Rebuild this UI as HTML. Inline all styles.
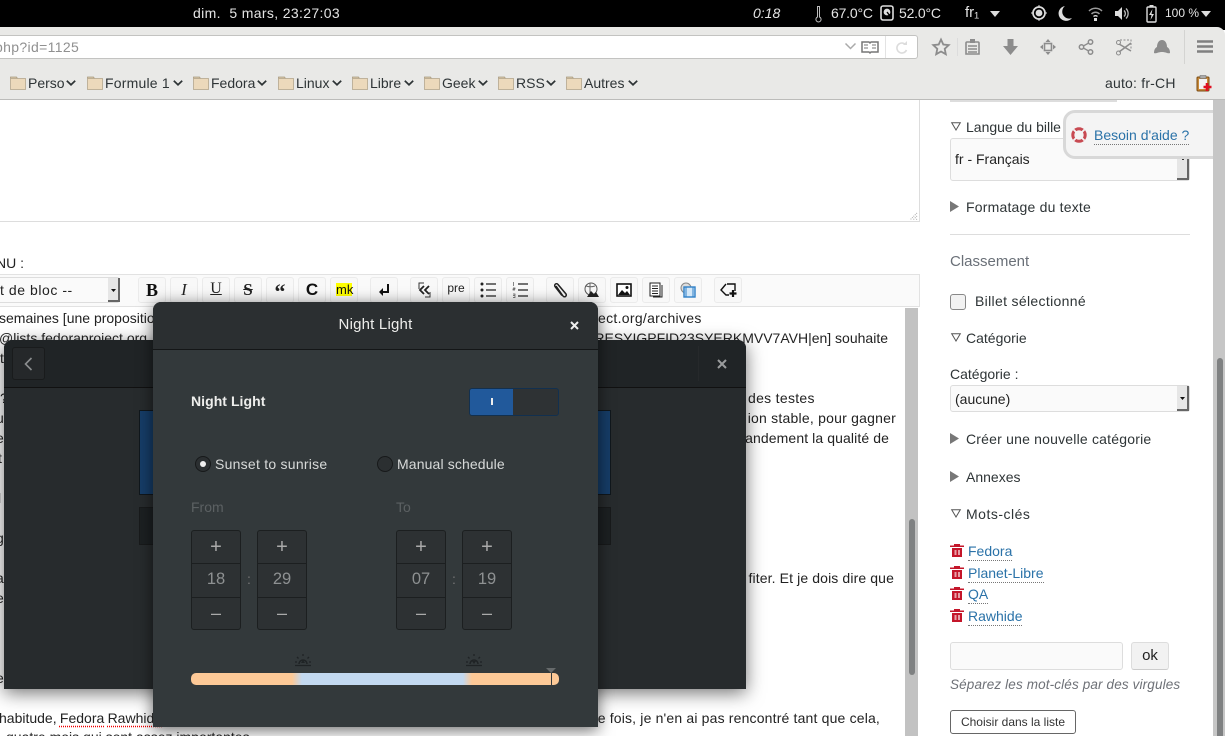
<!DOCTYPE html>
<html><head><meta charset="utf-8"><style>
html{margin:0;padding:0;width:1225px;height:736px;overflow:hidden}
body{margin:0;padding:0;width:1225px;height:736px;position:relative;overflow:hidden;background:#fff;font-family:"Liberation Sans",sans-serif;font-size:14px;color:#2e3436}
.a{position:absolute}
.t{position:absolute;white-space:nowrap;line-height:20px;height:20px}
svg{position:absolute;overflow:visible}
.btn{position:absolute;top:277px;width:28px;height:26px;background:#f8f8f8;border:1px solid #ebebeb;border-radius:3px;box-sizing:border-box}
.fold{position:absolute;top:76px;width:16px;height:14px}
.cv{position:absolute;top:80px}
.spin{position:absolute;top:530px;width:50px;height:100px;background:#2d3133;border:1px solid #1c1f20;border-radius:3px;box-sizing:border-box}
.spin i{position:absolute;left:0;right:0;height:1px;background:#1c1f20}
.spin b{position:absolute;left:0;right:0;text-align:center;font-weight:normal;color:#8e9192;line-height:20px}
.spin b.n{top:38px;font-size:16.5px}
.tag{position:absolute;left:950px;width:14px;height:14px}
.lnk{color:#2a72a8;border-bottom:1px dotted #777;line-height:16px;height:17px}
.shd{font-size:14px;color:#222}
.sel{position:absolute;background:#fafafa;border:1px solid #ddd;border-radius:3px;box-sizing:border-box}
.h{position:absolute;background:#e6e6e6;border-right:2px solid #666;border-bottom:2px solid #666;box-sizing:border-box}
</style></head><body>

<!-- top bar -->
<div class="a" style="left:0;top:0;width:1225px;height:30px;background:#000"></div>
<div class="t" style="left:193px;top:3px;color:#e4e4e4;font-size:14px;letter-spacing:.35px">dim.&nbsp; 5 mars, 23:27:03</div>
<div class="t" style="left:753px;top:3px;color:#e4e4e4;font-style:italic;font-size:14px">0:18</div>
<svg style="left:815px;top:5px" width="8" height="18"><path d="M2.5 1.5h2v10.5a2.6 2.6 0 1 1-2 0z" fill="none" stroke="#bbb"/></svg>
<div class="t" style="left:831px;top:3px;color:#e4e4e4;font-size:14px;letter-spacing:-.2px">67.0°C</div>
<svg style="left:880px;top:5px" width="14" height="16"><rect x="1" y="1" width="12" height="14" rx="2" fill="none" stroke="#ddd" stroke-width="1.6"/><circle cx="7" cy="7" r="3.4" fill="#ddd"/><path d="M7 7l3 4" stroke="#000" stroke-width="1.4"/></svg>
<div class="t" style="left:899px;top:3px;color:#e4e4e4;font-size:14px;letter-spacing:-.2px">52.0°C</div>
<div class="t" style="left:965px;top:3px;color:#e4e4e4;font-size:15px">fr₁</div>
<svg style="left:990px;top:11px" width="10" height="6"><path d="M0 0h10L5 6z" fill="#ddd"/></svg>
<svg style="left:1031px;top:5px" width="16" height="16"><circle cx="8" cy="8" r="6" fill="none" stroke="#ddd" stroke-width="1.7"/><circle cx="8" cy="8" r="3.4" fill="#ddd"/><path d="M8 0v2M8 14v2M0 8h2M14 8h2" stroke="#ddd"/></svg>
<svg style="left:1060px;top:6px" width="13" height="15"><path d="M5 0a7.5 7.5 0 1 0 7 12 A7 7 0 0 1 5 0z" fill="#ddd"/></svg>
<svg style="left:1088px;top:6px" width="15" height="15"><path d="M1 5a9 9 0 0 1 13 0M3.5 8a5.5 5.5 0 0 1 8 0" fill="none" stroke="#999" stroke-width="1.5"/><path d="M5.5 10.5a3 3 0 0 1 4 0" fill="none" stroke="#ddd" stroke-width="1.5"/><rect x="6" y="12" width="3" height="3" fill="#ddd"/></svg>
<svg style="left:1115px;top:6px" width="15" height="15"><path d="M0 5h3l4-4v13l-4-4H0z" fill="#ddd"/><path d="M9 4.5a4 4 0 0 1 0 6M11 2.5a7 7 0 0 1 0 10" fill="none" stroke="#bbb" stroke-width="1.3"/></svg>
<svg style="left:1146px;top:5px" width="11" height="18"><rect x="1" y="2" width="9" height="15" rx="1" fill="none" stroke="#ddd" stroke-width="1.4"/><rect x="3.5" y="0" width="4" height="2" fill="#ddd"/><path d="M6.5 4L3 10h2.5l-1 5L8 9H5.5z" fill="#ddd"/></svg>
<div class="t" style="left:1165px;top:3px;color:#e4e4e4;font-size:12px">100 %</div>
<svg style="left:1201px;top:11px" width="10" height="6"><path d="M0 0h10L5 6z" fill="#ddd"/></svg>

<!-- browser toolbar -->
<div class="a" style="left:0;top:27px;width:1225px;height:73px;background:#e9e9e7;border-bottom:1px solid #bcbcba;border-radius:0 8px 0 0;box-sizing:border-box"></div>
<div class="a" style="left:-4px;top:35px;width:922px;height:24px;background:#fff;border:1px solid #c3c3c1;border-radius:3px;box-sizing:border-box"></div>
<div class="t" style="left:-5px;top:37px;color:#909090;font-size:14px;letter-spacing:.35px">php?id=1125</div>
<svg style="left:845px;top:43px" width="11" height="7"><path d="M.5 .5L5.5 5.5 10.5 .5" fill="none" stroke="#aaa" stroke-width="1.5"/></svg>
<svg style="left:861px;top:40px" width="18" height="15"><path d="M1 2h7l1 1 1-1h7v10h-7l-1 1-1-1H1z" fill="none" stroke="#777" stroke-width="1.5"/><path d="M3 5h4M3 8h4M11 5h4M11 8h4" stroke="#777"/></svg>
<div class="a" style="left:885px;top:36px;width:1px;height:22px;background:#e3e3e3"></div>
<svg style="left:896px;top:41px" width="12" height="13"><path d="M9.5 3.5A5 5 0 1 0 10.5 9" fill="none" stroke="#dcdcdc" stroke-width="1.6"/><path d="M7 4l4-4v4z" fill="#dcdcdc"/></svg>
<svg style="left:932px;top:38px" width="18" height="18"><path d="M9 1.5l2.3 5 5.4.6-4 3.7 1.1 5.4L9 13.5 4.200 16.200l1.100-5.400-4-3.700 5.400-.6z" fill="none" stroke="#8c8c8c" stroke-width="1.8"/></svg>
<div class="a" style="left:957px;top:38px;width:1px;height:18px;background:#dcdcdc"></div>
<svg style="left:965px;top:39px" width="15" height="16"><path d="M2 3h11a1 1 0 0 1 1 1v11H1V4a1 1 0 0 1 1-1z" fill="none" stroke="#8c8c8c" stroke-width="1.6"/><rect x="5" y="0" width="5" height="4" fill="#8c8c8c"/><path d="M3 7h9M3 10h9M3 13h9" stroke="#8c8c8c" stroke-width="1.4"/></svg>
<svg style="left:1003px;top:39px" width="15" height="16"><path d="M4.500 0h6v7H15l-7.500 9L0 7h4.500z" fill="#8c8c8c"/></svg>
<svg style="left:1040px;top:39px" width="16" height="16"><rect x="4.500" y="4.500" width="7" height="7" fill="none" stroke="#8c8c8c" stroke-width="1.600"/><path d="M8 0l2.500 3h-5zM8 16l2.500-3h-5zM0 8l3-2.500v5zM16 8l-3-2.500v5z" fill="#8c8c8c"/></svg>
<svg style="left:1078px;top:39px" width="16" height="16"><path d="M12.500 3L3.500 8l9 5" fill="none" stroke="#8c8c8c" stroke-width="1.300"/><circle cx="12.500" cy="3" r="2.200" fill="#e9e9e7" stroke="#8c8c8c" stroke-width="1.500"/><circle cx="3.500" cy="8" r="2.200" fill="#e9e9e7" stroke="#8c8c8c" stroke-width="1.500"/><circle cx="12.500" cy="13" r="2.200" fill="#e9e9e7" stroke="#8c8c8c" stroke-width="1.500"/></svg>
<svg style="left:1116px;top:39px" width="16" height="17"><path d="M4 1h11v10" fill="none" stroke="#8c8c8c" stroke-dasharray="2 1.500"/><path d="M15 4L3 13M15 12L3 5" stroke="#8c8c8c" stroke-width="1.500"/><circle cx="2.500" cy="3.500" r="2" fill="none" stroke="#8c8c8c"/><circle cx="2.500" cy="14" r="2" fill="none" stroke="#8c8c8c"/></svg>
<svg style="left:1154px;top:40px" width="16" height="14"><path d="M0 13c0-3 1-5 3-6 0-4 2-7 5-7s5 3 5 7c2 1 3 3 3 6-2 1-4-1-8-1s-6 2-8 1z" fill="#8c8c8c"/></svg>
<div class="a" style="left:1184px;top:30px;width:1px;height:34px;background:#d4d4d2"></div>
<svg style="left:1197px;top:40px" width="16" height="13"><path d="M0 1.500h16M0 6.500h16M0 11.500h16" stroke="#808080" stroke-width="2.400"/></svg>

<!-- bookmarks -->
<svg width="0" height="0"><defs><g id="f"><path d="M.5 2.500V1h6l1 1.500" fill="#d9c6a8" stroke="#a89a80" stroke-width=".8"/><rect x=".5" y="2.500" width="15" height="11" fill="#ecd9bb" stroke="#b5a78e" stroke-width=".8"/></g><path id="c" d="M.8 .8L5 4.800 9.200 .8" fill="none" stroke="#2e3436" stroke-width="1.700"/></defs></svg>
<svg class="fold" style="left:10px"><use href="#f"/></svg><div class="t" style="left:28px;top:73px">Perso</div><svg class="cv" style="left:66px" width="10" height="6"><use href="#c"/></svg>
<svg class="fold" style="left:87px"><use href="#f"/></svg><div class="t" style="left:105px;top:73px;letter-spacing:.2px">Formule 1</div><svg class="cv" style="left:173px" width="10" height="6"><use href="#c"/></svg>
<svg class="fold" style="left:193px"><use href="#f"/></svg><div class="t" style="left:211px;top:73px">Fedora</div><svg class="cv" style="left:257px" width="10" height="6"><use href="#c"/></svg>
<svg class="fold" style="left:278px"><use href="#f"/></svg><div class="t" style="left:296px;top:73px">Linux</div><svg class="cv" style="left:332px" width="10" height="6"><use href="#c"/></svg>
<svg class="fold" style="left:352px"><use href="#f"/></svg><div class="t" style="left:370px;top:73px">Libre</div><svg class="cv" style="left:404px" width="10" height="6"><use href="#c"/></svg>
<svg class="fold" style="left:424px"><use href="#f"/></svg><div class="t" style="left:442px;top:73px">Geek</div><svg class="cv" style="left:478px" width="10" height="6"><use href="#c"/></svg>
<svg class="fold" style="left:498px"><use href="#f"/></svg><div class="t" style="left:516px;top:73px">RSS</div><svg class="cv" style="left:546px" width="10" height="6"><use href="#c"/></svg>
<svg class="fold" style="left:566px"><use href="#f"/></svg><div class="t" style="left:584px;top:73px">Autres</div><svg class="cv" style="left:628px" width="10" height="6"><use href="#c"/></svg>
<div class="t" style="left:1105px;top:73px;letter-spacing:.2px">auto: fr-CH</div>
<svg style="left:1196px;top:75px" width="16" height="17"><rect x="1" y="2" width="12" height="14" rx="1" fill="#c88a3a" stroke="#7a4a10"/><rect x="3" y="4" width="8" height="10" fill="#f4f4f4"/><rect x="4" y="0.500" width="6" height="3" fill="#aaa" stroke="#666" stroke-width=".5"/><path d="M11 8v8M7.500 12h8" stroke="#e01020" stroke-width="2.600"/></svg>

<!-- left content -->
<div class="a" style="left:0;top:100px;width:920px;height:122px;background:#fff;border-right:1px solid #ddd;border-bottom:1px solid #ddd;box-sizing:border-box"></div>
<svg style="left:908px;top:212px" width="10" height="9"><path d="M9 1L2 8M9 4L5 8M9 7L8 8" stroke="#aaa" stroke-dasharray="1 1"/></svg>
<div class="t" style="left:-4px;top:253px;color:#222;font-size:14px">NU :</div>

<div class="a" style="left:-2px;top:274px;width:922px;height:33px;background:#fafafa;border:1px solid #e2e2e2;box-sizing:border-box"></div>
<div class="sel" style="left:-5px;top:277px;width:125px;height:26px"></div>
<div class="h" style="left:108px;top:278px;width:12px;height:24px"></div>
<svg style="left:111px;top:289px" width="5" height="3"><path d="M0 0h5L2.500 3z" fill="#111"/></svg>
<div class="t" style="left:0;top:280px;color:#222;letter-spacing:.55px">t de bloc --</div>

<div class="btn" style="left:138px"></div><div class="t" style="left:138px;top:280px;width:28px;text-align:center;font:bold 18px/20px 'Liberation Serif',serif;color:#111">B</div>
<div class="btn" style="left:170px"></div><div class="t" style="left:170px;top:280px;width:28px;text-align:center;font:italic 17px/20px 'Liberation Serif',serif;color:#222">I</div>
<div class="btn" style="left:202px"></div><div class="t" style="left:202px;top:279px;width:28px;text-align:center;font:16px/20px 'Liberation Serif',serif;color:#222;text-decoration:underline">U</div>
<div class="btn" style="left:234px"></div><div class="t" style="left:234px;top:280px;width:28px;text-align:center;font:bold 17px/20px 'Liberation Serif',serif;color:#222;text-decoration:line-through">S</div>
<div class="btn" style="left:266px"></div><div class="t" style="left:266px;top:282px;width:28px;text-align:center;font:bold 22px/20px 'Liberation Serif',serif;color:#222">“</div>
<div class="btn" style="left:298px"></div><div class="t" style="left:298px;top:280px;width:28px;text-align:center;font:bold 17px/20px 'Liberation Sans',sans-serif;color:#111">C</div>
<div class="btn" style="left:330px"></div><div class="t" style="left:336px;top:283px;width:16px;height:13px;text-align:center;background:#ff0;font-size:13px;line-height:13px;color:#111;overflow:visible">mk</div>
<div class="btn" style="left:370px"></div><svg style="left:377px;top:283px" width="14" height="14"><path d="M11 1v8H5" fill="none" stroke="#111" stroke-width="2"/><path d="M6 5L2 9l4 4z" fill="#111"/></svg>
<div class="btn" style="left:410px"></div><svg style="left:416px;top:282px" width="17" height="16"><path d="M3 7V1h5M9 15h5v-5" fill="none" stroke="#333"/><path d="M8 4L4 8l4 4M13 4L9 8l4 4" fill="none" stroke="#222" stroke-width="1.800"/></svg>
<div class="btn" style="left:442px"></div><div class="t" style="left:442px;top:278px;width:28px;text-align:center;font-size:12px;color:#222">pre</div>
<div class="btn" style="left:474px"></div><svg style="left:480px;top:282px" width="17" height="16"><path d="M6 2h10M6 8h10M6 14h10" stroke="#222" stroke-width="1.300"/><circle cx="2" cy="2" r="1.500" fill="#222"/><circle cx="2" cy="8" r="1.500" fill="#222"/><circle cx="2" cy="14" r="1.500" fill="#222"/></svg>
<div class="btn" style="left:506px"></div><svg style="left:512px;top:282px" width="17" height="16"><path d="M6 2h10M6 8h10M6 14h10" stroke="#222" stroke-width="1.300"/><path d="M1.500 0v4M1 6h2v1H1v1h2M1 12h2v1.500H1M3 14v1.500H1" stroke="#555" stroke-width=".7" fill="none"/></svg>
<div class="btn" style="left:546px"></div><svg style="left:553px;top:282px" width="14" height="16"><path d="M3 3l7 10a1.800 1.800 0 0 0 3-2L5 1.500a1 1 0 0 0-3 2l7 9" fill="none" stroke="#222" stroke-width="1.500" transform="translate(0,1)"/></svg>
<div class="btn" style="left:578px"></div><svg style="left:584px;top:282px" width="16" height="16"><circle cx="7" cy="7" r="6" fill="none" stroke="#555"/><path d="M6 1v12M2 4c3 1 6 1 9 0" fill="none" stroke="#666"/><path d="M3 15l4-6 3 3 2-2 3 5z" fill="#222"/></svg>
<div class="btn" style="left:610px"></div><svg style="left:616px;top:283px" width="16" height="14"><rect x="1" y="1" width="14" height="12" fill="#fff" stroke="#111" stroke-width="1.600"/><path d="M2 12l4-5 3 3 2-2 3 4z" fill="#111"/><circle cx="11" cy="4.500" r="1.500" fill="#111"/></svg>
<div class="btn" style="left:642px"></div><svg style="left:649px;top:282px" width="14" height="16"><rect x="1" y="1" width="10" height="13" fill="#fff" stroke="#222"/><path d="M3 4h6M3 6.500h6M3 9h6M3 11.500h6" stroke="#222"/><path d="M13 3v12H4" fill="none" stroke="#222"/></svg>
<div class="btn" style="left:674px"></div><svg style="left:680px;top:282px" width="16" height="16"><circle cx="6" cy="6" r="5" fill="#ddd" stroke="#888"/><rect x="4" y="5" width="11" height="10" fill="#d4e8f8" stroke="#2f80c8" stroke-width="1.400"/><path d="M6 5v10M13 5v10" stroke="#2f80c8"/></svg>
<div class="btn" style="left:714px"></div><svg style="left:720px;top:282px" width="17" height="16"><path d="M7 2h8v7M6 2L1 8l5 5h3" fill="none" stroke="#111" stroke-width="1.400"/><path d="M13 8v7M9.500 11.500h7" stroke="#111" stroke-width="2.200"/></svg>

<!-- editor text -->
<div class="t shd" style="left:-1px;top:308px">semaines [une proposition</div>
<div class="t shd" style="left:-1px;top:328px">@lists.fedoraproject.org</div>
<div class="t shd" style="left:0;top:348px">t</div>
<div class="t shd" style="left:0;top:388px">?</div>
<div class="t shd" style="left:-4px;top:408px">u</div>
<div class="t shd" style="left:-4px;top:428px">e</div>
<div class="t shd" style="left:-2px;top:448px">t</div>
<div class="t shd" style="left:-2px;top:488px">l</div>
<div class="t shd" style="left:-4px;top:528px">g</div>
<div class="t shd" style="left:-4px;top:568px">a</div>
<div class="t shd" style="left:-4px;top:588px">e</div>
<div class="t shd" style="left:-4px;top:668px">e</div>
<div class="t shd" style="left:-1px;top:708px;word-spacing:-.6px">habitude, <span style="text-decoration:underline dotted #e00;text-underline-offset:3px">Fedora</span> <span style="text-decoration:underline dotted #e00;text-underline-offset:3px">Rawhide</span></div>
<div class="t shd" style="left:6px;top:727px">quatre mois qui sont assez importantes</div>
<div class="t shd" style="left:598px;top:308px;letter-spacing:.3px">ect.org/archives</div>
<div class="t shd" style="left:560px;top:328px;width:328px;text-align:right">RESYIGPFID23SYERKMVV7AVH|en] souhaite</div>
<div class="t shd" style="left:748px;top:388px;letter-spacing:.3px">des testes</div>
<div class="t shd" style="left:740px;top:408px;width:156px;text-align:right;letter-spacing:.22px">ion stable, pour gagner</div>
<div class="t shd" style="left:740px;top:428px;width:149px;text-align:right;letter-spacing:.1px">andement la qualité de</div>
<div class="t shd" style="left:740px;top:568px;width:154px;text-align:right;letter-spacing:.12px">fiter. Et je dois dire que</div>
<div class="t shd" style="left:590px;top:708px;width:290px;text-align:right;letter-spacing:.17px">e fois, je n'en ai pas rencontré tant que cela,</div>

<!-- editor scrollbar -->
<div class="a" style="left:905px;top:308px;width:13px;height:428px;background:#c2c2c2"></div>
<div class="a" style="left:909px;top:519px;width:6px;height:156px;background:#7f8182;border-radius:3px"></div>

<!-- sidebar -->
<div class="a" style="left:950px;top:100px;width:167px;height:2px;background:#ddd"></div>
<svg style="left:951px;top:122px" width="10" height="9"><path d="M.7 .7h8.600L5 8z" fill="none" stroke="#555"/></svg>
<div class="t" style="left:966px;top:117px">Langue du bille</div>
<div class="sel" style="left:950px;top:138px;width:240px;height:43px"></div>
<div class="h" style="left:1177px;top:155px;width:12px;height:25px"></div>
<div class="a" style="left:1182px;top:159px;width:2px;height:1px;background:#333"></div>
<div class="t" style="left:955px;top:149px;color:#222">fr - Français</div>
<svg style="left:950px;top:201px" width="10" height="11"><path d="M0 0l9 5.500L0 11z" fill="#777"/></svg>
<div class="t" style="left:966px;top:197px;letter-spacing:.2px">Formatage du texte</div>
<div class="a" style="left:950px;top:234px;width:240px;height:1px;background:#ddd"></div>
<div class="t" style="left:950px;top:251px;color:#6a7078;font-size:15px;line-height:22px">Classement</div>
<div class="a" style="left:950px;top:294px;width:16px;height:16px;background:#f2f2f2;border:1px solid #888;border-radius:3px;box-sizing:border-box"></div>
<div class="t" style="left:975px;top:291px;letter-spacing:.33px">Billet sélectionné</div>
<svg style="left:951px;top:333px" width="10" height="9"><path d="M.7 .7h8.600L5 8z" fill="none" stroke="#555"/></svg>
<div class="t" style="left:966px;top:328px">Catégorie</div>
<div class="t" style="left:950px;top:364px">Catégorie :</div>
<div class="sel" style="left:950px;top:385px;width:240px;height:27px"></div>
<div class="h" style="left:1177px;top:386px;width:12px;height:25px"></div>
<svg style="left:1180px;top:397px" width="5" height="3"><path d="M0 0h5L2.500 3z" fill="#111"/></svg>
<div class="t" style="left:955px;top:389px;color:#222">(aucune)</div>
<svg style="left:950px;top:433px" width="10" height="11"><path d="M0 0l9 5.500L0 11z" fill="#777"/></svg>
<div class="t" style="left:966px;top:429px;letter-spacing:.2px">Créer une nouvelle catégorie</div>
<svg style="left:950px;top:471px" width="10" height="11"><path d="M0 0l9 5.500L0 11z" fill="#777"/></svg>
<div class="t" style="left:966px;top:467px">Annexes</div>
<svg style="left:951px;top:509px" width="10" height="9"><path d="M.7 .7h8.600L5 8z" fill="none" stroke="#555"/></svg>
<div class="t" style="left:966px;top:504px;letter-spacing:.5px">Mots-clés</div>

<svg width="0" height="0"><defs><g id="tr"><path d="M0 2.500h14v1.500H0zM4 1h6v1.500H4z" fill="#c4162a"/><rect x="2" y="5" width="10" height="9" fill="#c4162a"/><rect x="4.500" y="7" width="2" height="5" fill="#e8a0a8"/><rect x="8" y="7" width="2" height="5" fill="#e8a0a8"/></g></defs></svg>
<svg class="tag" style="top:543px"><use href="#tr"/></svg><div class="t lnk" style="left:968px;top:543px">Fedora</div>
<svg class="tag" style="top:565px"><use href="#tr"/></svg><div class="t lnk" style="left:968px;top:565px">Planet-Libre</div>
<svg class="tag" style="top:586px"><use href="#tr"/></svg><div class="t lnk" style="left:968px;top:586px">QA</div>
<svg class="tag" style="top:608px"><use href="#tr"/></svg><div class="t lnk" style="left:968px;top:608px">Rawhide</div>
<div class="sel" style="left:950px;top:642px;width:173px;height:28px"></div>
<div class="a" style="left:1131px;top:642px;width:38px;height:28px;background:#f2f2f2;border:1px solid #ddd;border-bottom-color:#ccc;border-radius:3px;box-sizing:border-box"></div>
<div class="t" style="left:1131px;top:646px;width:38px;text-align:center;color:#222;font-size:15px">ok</div>
<div class="t" style="left:950px;top:675px;font-style:italic;color:#6e7177;font-size:13.500px;letter-spacing:.14px">Séparez les mot-clés par des virgules</div>
<div class="a" style="left:950px;top:710px;width:126px;height:24px;background:#fff;border:1px solid #666;border-radius:3px;box-sizing:border-box"></div>
<div class="t" style="left:950px;top:712px;width:126px;text-align:center;font-size:12px;color:#333">Choisir dans la liste</div>

<!-- sidebar scrollbar -->
<div class="a" style="left:1213px;top:100px;width:12px;height:636px;background:#c6c6c6"></div>
<div class="a" style="left:1217px;top:358px;width:6px;height:378px;background:#7f8182;border-radius:3px 3px 0 0"></div>

<!-- help tab -->
<div class="a" style="left:1063px;top:110px;width:170px;height:49px;background:#f4f4f4;border:3px solid #d8d8d8;border-radius:12px;box-sizing:border-box"></div>
<div class="a" style="left:1213px;top:100px;width:12px;height:60px;background:#c6c6c6"></div>
<svg style="left:1071px;top:127px" width="16" height="16"><circle cx="8" cy="8" r="6.200" fill="#f4f4f4" stroke="#c84a52" stroke-width="3"/><path d="M2.500 2.500l3 3M13.500 2.500l-3 3M2.500 13.500l3-3M13.500 13.500l-3-3" stroke="#f4f4f4" stroke-width="1.800"/></svg>
<div class="t lnk" style="left:1094px;top:127px">Besoin d'aide ?</div>

<!-- back dialog -->
<div class="a" style="left:4px;top:340px;width:742px;height:349px;background:#272b2d;border-radius:8px 8px 0 0;box-shadow:0 4px 18px rgba(0,0,0,.55)"></div>
<div class="a" style="left:4px;top:340px;width:742px;height:48px;background:#202426;border-bottom:1px solid #111;border-radius:8px 8px 0 0;box-sizing:border-box"></div>
<div class="a" style="left:12px;top:347px;width:33px;height:33px;background:#25282a;border:1px solid #191b1c;border-radius:3px;box-sizing:border-box"></div>
<svg style="left:24px;top:357px" width="9" height="14"><path d="M7.500 1L1.500 7l6 6" fill="none" stroke="#8a8d8e" stroke-width="1.600"/></svg>
<div class="a" style="left:698px;top:346px;width:1px;height:35px;background:#26292b"></div>
<svg style="left:717px;top:359px" width="10" height="10"><path d="M1 1l8 8M9 1l-8 8" stroke="#9a9c9d" stroke-width="2"/></svg>
<div class="a" style="left:139px;top:410px;width:472px;height:85px;background:#163d68;border:1px solid #10171c;box-sizing:border-box"></div>
<div class="a" style="left:139px;top:507px;width:472px;height:38px;background:#1c2022;border:1px solid #181a1b;box-sizing:border-box"></div>

<!-- front dialog -->
<div class="a" style="left:153px;top:302px;width:445px;height:425px;background:#33393b;border-radius:8px 8px 0 0;box-shadow:0 3px 16px rgba(0,0,0,.6)"></div>
<div class="a" style="left:153px;top:302px;width:445px;height:48px;background:#2b2f31;border-bottom:1px solid #141617;border-radius:8px 8px 0 0;box-sizing:border-box"></div>
<div class="t" style="left:153px;top:315px;width:445px;text-align:center;color:#eeeeec;font-size:15px;letter-spacing:.2px">Night Light</div>
<svg style="left:570px;top:321px" width="9" height="9"><path d="M1 1l7 7M8 1l-7 7" stroke="#eee" stroke-width="2"/></svg>

<div class="t" style="left:191px;top:391px;color:#eeeeec;font-weight:bold;font-size:14px;letter-spacing:.05px">Night Light</div>
<div class="a" style="left:469px;top:388px;width:90px;height:28px;background:#2e3234;border:1px solid #12304f;border-radius:3px;box-sizing:border-box"></div>
<div class="a" style="left:470px;top:389px;width:43px;height:26px;background:#21599b;border-radius:2px 0 0 2px"></div>
<div class="a" style="left:491px;top:398px;width:2px;height:7px;background:#eee"></div>

<svg style="left:195px;top:456px" width="16" height="16"><circle cx="8" cy="8" r="7.500" fill="#2b2f31" stroke="#17191a"/><circle cx="8" cy="8" r="3" fill="#eee"/></svg>
<div class="t" style="left:215px;top:454px;color:#d8dad9;letter-spacing:.25px">Sunset to sunrise</div>
<svg style="left:377px;top:456px" width="16" height="16"><circle cx="8" cy="8" r="7.500" fill="#2b2f31" stroke="#17191a"/></svg>
<div class="t" style="left:397px;top:454px;color:#d8dad9;letter-spacing:.13px">Manual schedule</div>

<div class="t" style="left:191px;top:497px;color:#5c6163">From</div>
<div class="t" style="left:396px;top:497px;color:#5c6163">To</div>

<div class="spin" style="left:191px"><i style="top:32px"></i><i style="top:66px"></i><b style="top:6px;font-size:20px;color:#aaa">+</b><b class="n">18</b><b style="top:72px;font-size:18px;color:#aaa">–</b></div>
<div class="t" style="left:247px;top:569px;color:#777">:</div>
<div class="spin" style="left:257px"><i style="top:32px"></i><i style="top:66px"></i><b style="top:6px;font-size:20px;color:#aaa">+</b><b class="n">29</b><b style="top:72px;font-size:18px;color:#aaa">–</b></div>
<div class="spin" style="left:396px"><i style="top:32px"></i><i style="top:66px"></i><b style="top:6px;font-size:20px;color:#aaa">+</b><b class="n">07</b><b style="top:72px;font-size:18px;color:#aaa">–</b></div>
<div class="t" style="left:452px;top:569px;color:#777">:</div>
<div class="spin" style="left:462px"><i style="top:32px"></i><i style="top:66px"></i><b style="top:6px;font-size:20px;color:#aaa">+</b><b class="n">19</b><b style="top:72px;font-size:18px;color:#aaa">–</b></div>

<svg style="left:295px;top:654px" width="16" height="13"><path d="M0 11.500h16" stroke="#1f2325" stroke-width="1.300"/><path d="M4 10a4 4 0 0 1 8 0" fill="none" stroke="#1f2325" stroke-width="1.500"/><path d="M8 0v2M2 3l1.500 1.500M14 3l-1.500 1.500M0 8h2M14 8h2" stroke="#1f2325" stroke-width="1.300"/><path d="M8 6l-2 3h4z" fill="#1f2325"/></svg>
<svg style="left:466px;top:654px" width="16" height="13"><path d="M0 11.500h16" stroke="#1f2325" stroke-width="1.300"/><path d="M4 10a4 4 0 0 1 8 0" fill="none" stroke="#1f2325" stroke-width="1.500"/><path d="M8 0v2M2 3l1.500 1.500M14 3l-1.500 1.500M0 8h2M14 8h2" stroke="#1f2325" stroke-width="1.300"/><path d="M8 10l-2-3h4z" fill="#1f2325"/></svg>
<div class="a" style="left:191px;top:673px;width:368px;height:12px;border-radius:5px;background:linear-gradient(90deg,#fdc997 0,#fdc997 101px,#c3d9f0 111px,#c3d9f0 272px,#fdc997 281px,#fdc997 100%)"></div>
<svg style="left:546px;top:668px" width="10" height="6"><path d="M0 0h10L5 5z" fill="#666a6b"/></svg>
<div class="a" style="left:551px;top:673px;width:1px;height:12px;background:#33393b"></div>
</body></html>
